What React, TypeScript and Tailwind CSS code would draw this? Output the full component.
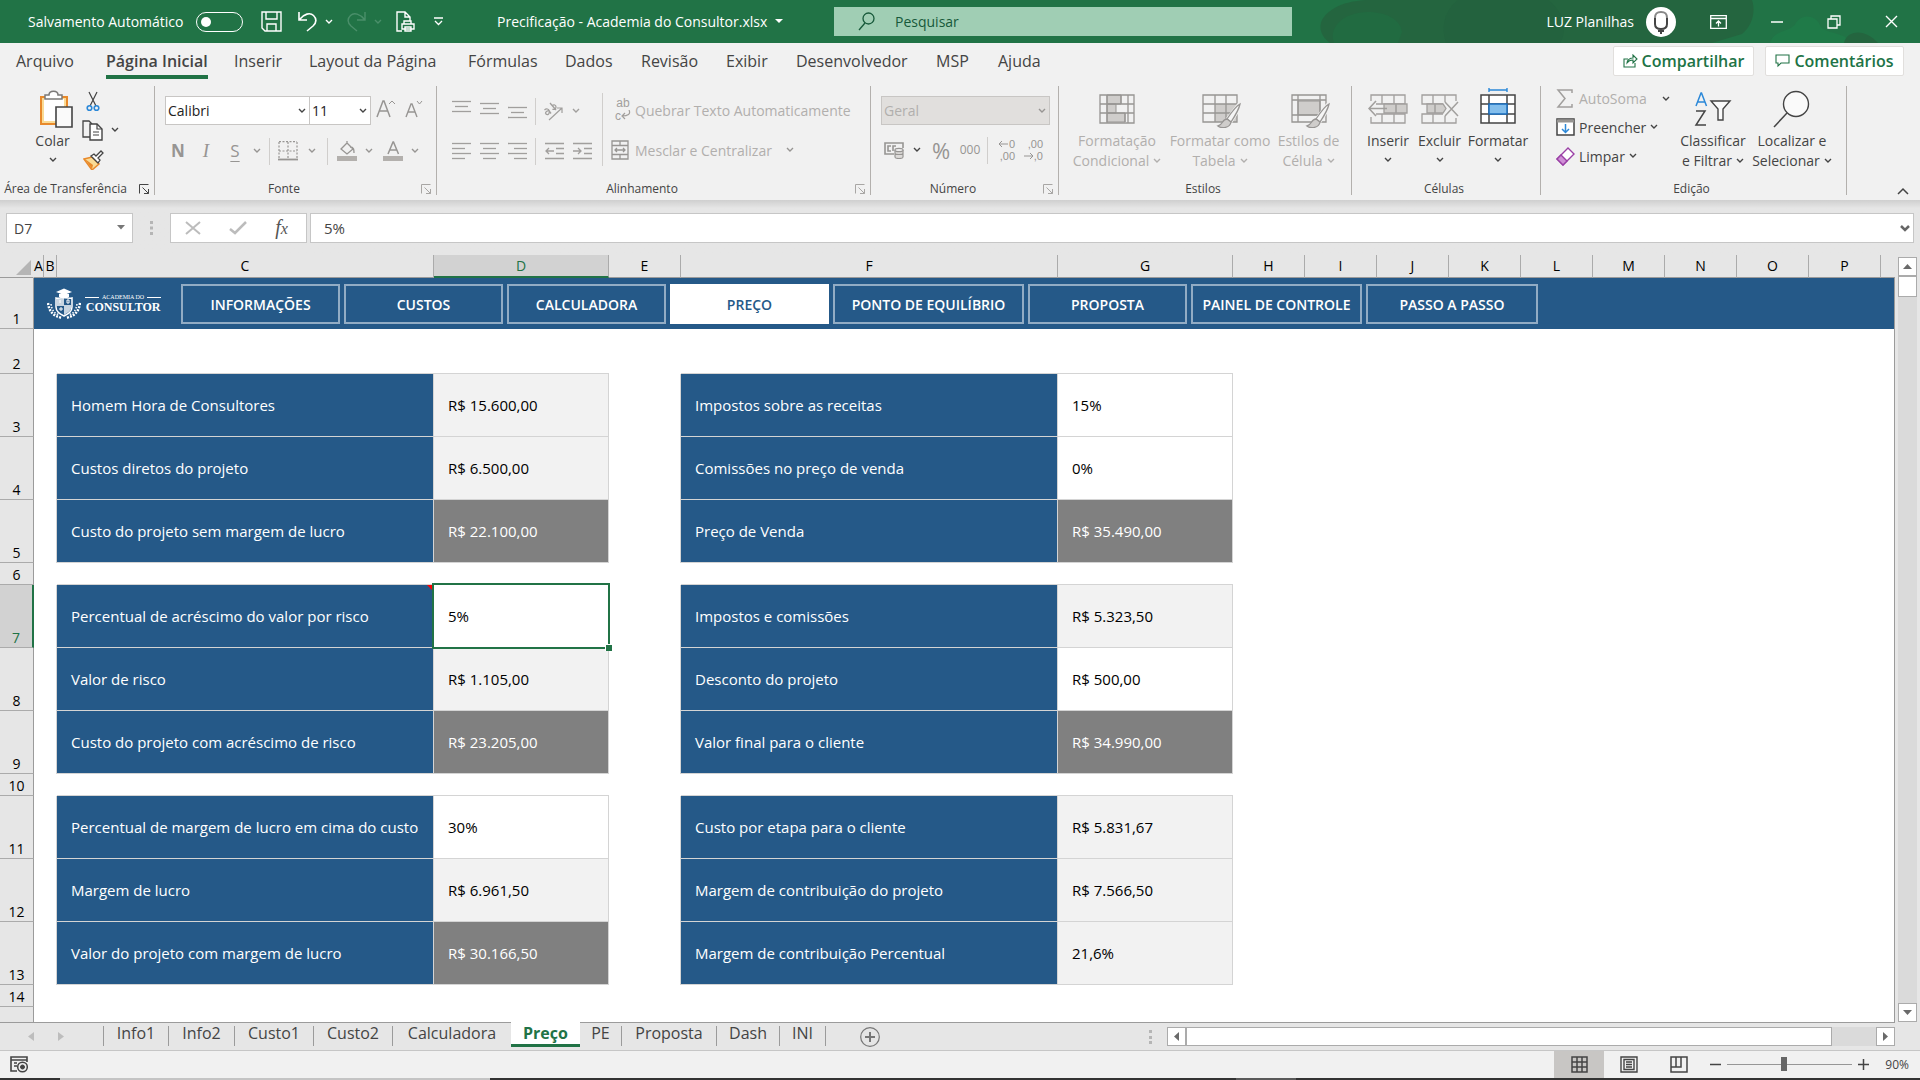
import type { ReactNode } from 'react'

const MENU = [
  { label: 'Arquivo', width: 'w-[90px]' },
  { label: 'Página Inicial', width: 'w-[128px]', active: true },
  { label: 'Inserir', width: 'w-[75px]' },
  { label: 'Layout da Página', width: 'w-[159px]' },
  { label: 'Fórmulas', width: 'w-[97px]' },
  { label: 'Dados', width: 'w-[76px]' },
  { label: 'Revisão', width: 'w-[85px]' },
  { label: 'Exibir', width: 'w-[70px]' },
  { label: 'Desenvolvedor', width: 'w-[140px]' },
  { label: 'MSP', width: 'w-[62px]' },
  { label: 'Ajuda', width: 'w-[60px]' },
]

const NAV = [
  { label: 'INFORMAÇÕES', width: 'w-[159px]' },
  { label: 'CUSTOS', width: 'w-[159px]' },
  { label: 'CALCULADORA', width: 'w-[159px]' },
  { label: 'PREÇO', width: 'w-[159px]', active: true },
  { label: 'PONTO DE EQUILÍBRIO', width: 'w-[191px]' },
  { label: 'PROPOSTA', width: 'w-[159px]' },
  { label: 'PAINEL DE CONTROLE', width: 'w-[171px]' },
  { label: 'PASSO A PASSO', width: 'w-[172px]' },
]

const COLUMNS = [
  { name: 'A', width: 'w-[10px]' },
  { name: 'B', width: 'w-[13px]' },
  { name: 'C', width: 'w-[377px]' },
  { name: 'D', width: 'w-[175px]' },
  { name: 'E', width: 'w-[72px]' },
  { name: 'F', width: 'w-[377px]' },
  { name: 'G', width: 'w-[175px]' },
  { name: 'H', width: 'w-[72px]' },
  { name: 'I', width: 'w-[72px]' },
  { name: 'J', width: 'w-[72px]' },
  { name: 'K', width: 'w-[72px]' },
  { name: 'L', width: 'w-[72px]' },
  { name: 'M', width: 'w-[72px]' },
  { name: 'N', width: 'w-[72px]' },
  { name: 'O', width: 'w-[72px]' },
  { name: 'P', width: 'w-[72px]' },
]

type Tone = 'input' | 'calc' | 'total'

type Row =
  | { n: number; kind: 'gap'; height: string; edge?: boolean }
  | { n: number; kind: 'data'; left: [string, string, Tone]; right: [string, string, Tone] }

const ROWS: Row[] = [
  { n: 2, kind: 'gap', height: 'h-[45px]', edge: true },
  { n: 3, kind: 'data', left: ['Homem Hora de Consultores', 'R$ 15.600,00', 'calc'], right: ['Impostos sobre as receitas', '15%', 'input'] },
  { n: 4, kind: 'data', left: ['Custos diretos do projeto', 'R$ 6.500,00', 'calc'], right: ['Comissões no preço de venda', '0%', 'input'] },
  { n: 5, kind: 'data', left: ['Custo do projeto sem margem de lucro', 'R$ 22.100,00', 'total'], right: ['Preço de Venda', 'R$ 35.490,00', 'total'] },
  { n: 6, kind: 'gap', height: 'h-[22px]', edge: true },
  { n: 7, kind: 'data', left: ['Percentual de acréscimo do valor por risco', '5%', 'input'], right: ['Impostos e comissões', 'R$ 5.323,50', 'calc'] },
  { n: 8, kind: 'data', left: ['Valor de risco', 'R$ 1.105,00', 'calc'], right: ['Desconto do projeto', 'R$ 500,00', 'input'] },
  { n: 9, kind: 'data', left: ['Custo do projeto com acréscimo de risco', 'R$ 23.205,00', 'total'], right: ['Valor final para o cliente', 'R$ 34.990,00', 'total'] },
  { n: 10, kind: 'gap', height: 'h-[22px]', edge: true },
  { n: 11, kind: 'data', left: ['Percentual de margem de lucro em cima do custo', '30%', 'input'], right: ['Custo por etapa para o cliente', 'R$ 5.831,67', 'calc'] },
  { n: 12, kind: 'data', left: ['Margem de lucro', 'R$ 6.961,50', 'calc'], right: ['Margem de contribuição do projeto', 'R$ 7.566,50', 'calc'] },
  { n: 13, kind: 'data', left: ['Valor do projeto com margem de lucro', 'R$ 30.166,50', 'total'], right: ['Margem de contribuição Percentual', '21,6%', 'calc'] },
  { n: 14, kind: 'gap', height: 'h-[22px]' },
]

const TONES: Record<Tone, string> = {
  input: 'bg-white text-black',
  calc: 'bg-[#f2f2f2] text-black',
  total: 'bg-[#808080] text-white',
}

const SHEETS = [
  { label: 'Info1', width: 'w-[66px]' },
  { label: 'Info2', width: 'w-[66px]' },
  { label: 'Custo1', width: 'w-[79px]' },
  { label: 'Custo2', width: 'w-[79px]' },
  { label: 'Calculadora', width: 'w-[118px]' },
  { label: 'Preço', width: 'w-[69px]', active: true },
  { label: 'PE', width: 'w-[42px]' },
  { label: 'Proposta', width: 'w-[95px]' },
  { label: 'Dash', width: 'w-[63px]' },
  { label: 'INI', width: 'w-[46px]' },
]

/* ---------- small drawing helpers ---------- */

function Svg({ w, h, children, className = '' }: { w: number; h: number; children: ReactNode; className?: string }) {
  return (
    <svg aria-hidden width={w} height={h} viewBox={`0 0 ${w} ${h}`} fill="none" stroke="currentColor" className={`shrink-0 ${className}`}>
      {children}
    </svg>
  )
}

function Chevron({ className = '' }: { className?: string }) {
  return (
    <Svg w={8} h={6} className={className}>
      <path d="M1 1l3 3 3-3" strokeWidth="1.4" />
    </Svg>
  )
}

function Launcher({ className = '' }: { className?: string }) {
  return (
    <Svg w={11} h={11} className={className}>
      <path d="M.5 9.500V.5h9M3.500 3.500l6 6M9.500 5v4.500H5" />
    </Svg>
  )
}

function Lines({ rows, w = 19 }: { rows: [number, number][]; w?: number }) {
  return (
    <Svg w={w} h={18}>
      {rows.map(([x1, x2], i) => (
        <path key={i} d={`M${x1} ${i * 5 + 1.5}H${x2}`} strokeWidth="1.3" />
      ))}
    </Svg>
  )
}

function IconButton({ label, width = 'w-7', className = '', children }: { label: string; width?: string; className?: string; children: ReactNode }) {
  return (
    <button type="button" aria-label={label} className={`flex h-[30px] shrink-0 items-center justify-center ${width} ${className}`}>
      {children}
    </button>
  )
}

function Rule({ className = 'h-[27px]' }: { className?: string }) {
  return <span className={`w-px shrink-0 bg-[#d0cecc] ${className}`} />
}

function Group({ label, width, launcher, children }: { label: string; width: string; launcher?: 'on' | 'off'; children: ReactNode }) {
  return (
    <section aria-label={label} className={`flex h-[109px] shrink-0 flex-col justify-between border-r border-[#b3b0ad] ${width}`}>
      {children}
      <div className="flex items-center pr-1">
        <span className={`flex-1 text-center text-[12px] leading-3 whitespace-nowrap text-[#444] ${launcher ? 'pr-2' : ''}`}>{label}</span>
        {launcher && (
          <button type="button" aria-label={`Opções de ${label}`} className={launcher === 'on' ? 'text-[#444]' : 'text-[#a8a6a4]'}>
            <Launcher />
          </button>
        )}
      </div>
    </section>
  )
}

function BigButton({ lines, width, icon, chevronBelow, muted }: { lines: string[]; width: string; icon: ReactNode; chevronBelow?: boolean; muted?: boolean }) {
  return (
    <button type="button" className={`flex shrink-0 flex-col items-center ${width} ${muted ? 'text-[#b1afad]' : 'text-[#444]'}`}>
      <span className="flex h-[45px] items-center">{icon}</span>
      {lines.map((line, i) => (
        <span key={line} className="flex h-5 items-center gap-1 whitespace-nowrap text-[14px] leading-5">
          {line}
          {!chevronBelow && i === lines.length - 1 && <Chevron />}
        </span>
      ))}
      {chevronBelow && <Chevron className="mt-1.5" />}
    </button>
  )
}

const Brush = () => (
  <g>
    <path d="M36 11L23 28l4 3L39 12z" fill="#f1f1f1" stroke="#f1f1f1" strokeWidth="3" />
    <path d="M38 10c-4 2-9 9-13 15l4 3c4-6 8-13 9-18z" fill="#f5f5f5" stroke="#979593" strokeWidth="1.300" />
    <path d="M25 25c-5 0-4 6-9 7 4 3 12 2 13-4z" fill="#cfcdcb" stroke="#979593" strokeWidth="1.300" />
  </g>
)

/* ---------- title bar ---------- */

function TitleBar() {
  return (
    <header className="relative flex h-[43px] items-center bg-[#217346] text-[14px] text-white">
      <svg aria-hidden className="pointer-events-none absolute top-0 right-0" width="660" height="43" viewBox="0 0 660 43" fill="#24653f">
        <path d="M62 20C70 6 90 0 110 0h382c4 12 0 26-10 34l-30 9H70c-8-6-12-14-8-23z" />
        <path d="M108 12c16 0 32 6 34 20l-4 11H74c-6-14 8-31 34-31z" fill="#216b41" />
        <path d="M186 43c-6-18 0-34 12-43h90c16 12 20 30 12 43z" fill="#23623e" />
        <path d="M510 43c4-14 20-10 26-20s20-8 24 2 26 6 30 18z" fill="#1f7a48" />
        <path d="M584 43c2-12 20-16 34 0z" />
      </svg>
      <div className="relative flex w-[834px] shrink-0 items-center pl-7">
        <label className="flex w-[233px] shrink-0 items-center gap-2">
          <span className="w-[160px] whitespace-nowrap">Salvamento Automático</span>
          <input type="checkbox" className="peer sr-only" />
          <span className="flex h-5 w-[47px] items-center rounded-full border border-white pl-1">
            <span className="size-[10px] rounded-full bg-white" />
          </span>
        </label>
        <button type="button" aria-label="Salvar" className="w-[37px]">
          <Svg w={21} h={21}>
            <path d="M1 1h19v19H4l-3-3zM5 1v7h11V1M6 20v-7h9v7" strokeWidth="1.400" />
          </Svg>
        </button>
        <button type="button" aria-label="Desfazer" className="flex w-[49px] items-center gap-2">
          <Svg w={19} h={21}>
            <path d="M1 1v8h8M1.500 8.500C6 3 12 1 15.500 4.500S18 12 15 15l-6 5" strokeWidth="1.600" />
          </Svg>
          <Chevron />
        </button>
        <button type="button" aria-label="Refazer" className="flex w-[49px] items-center gap-2 text-[#4a8f6a]">
          <Svg w={19} h={21}>
            <path d="M18 1v8h-8M17.500 8.500C13 3 7 1 3.500 4.500S1 12 4 15l6 5" strokeWidth="1.400" />
          </Svg>
          <Chevron />
        </button>
        <button type="button" aria-label="Visualizar impressão" className="w-[38px]">
          <Svg w={19} h={21}>
            <path d="M6 20H1V1h8l5 5v4M9 1v5h5M8 13v-3h7v3M6 13h12v5H6zM9 16h6v4H9z" strokeWidth="1.400" />
          </Svg>
        </button>
        <button type="button" aria-label="Personalizar barra" className="w-[63px]">
          <Svg w={9} h={9}>
            <path d="M0 1h9M1 4l3.500 3.500L8 4" strokeWidth="1.300" />
          </Svg>
        </button>
        <h1 className="mr-2 whitespace-nowrap">Precificação - Academia do Consultor.xlsx</h1>
        <Svg w={8} h={5}>
          <path d="M0 0h8L4 4z" fill="currentColor" stroke="none" />
        </Svg>
      </div>
      <label className="relative flex h-[29px] w-[458px] shrink-0 items-center gap-5 bg-[#a0ceb4] pl-6 text-[#17593a]">
        <Svg w={17} h={19}>
          <circle cx="10.500" cy="6.500" r="5.500" strokeWidth="1.300" />
          <path d="M7 11l-6 7" strokeWidth="1.300" />
        </Svg>
        <input type="text" aria-label="Pesquisar" placeholder="Pesquisar" className="w-full bg-transparent outline-none placeholder:text-[#17593a]" />
      </label>
      <div className="relative ml-auto flex items-center">
        <span className="mr-3 whitespace-nowrap">LUZ Planilhas</span>
        <span className="flex size-[30px] items-center justify-center rounded-full bg-white text-[#444]">
          <Svg w={16} h={24}>
            <path d="M2 8C2 3 4 2 8 2s6 1 6 6" stroke="#888" strokeWidth="2" />
            <path d="M2 8v6c0 4 3 5 6 5s6-1 6-5V8M5 21h6M7 23h2" strokeWidth="2" />
          </Svg>
        </span>
        <button type="button" aria-label="Opções da faixa" className="ml-[26px] flex w-[46px] justify-center pr-3.5">
          <Svg w={17} h={14}>
            <path d="M.7.7h15.600v12.600H.7zM.7 3.500h15.600M8.500 11.500V6M6 8.500L8.500 6 11 8.500" strokeWidth="1.300" />
          </Svg>
        </button>
        <button type="button" aria-label="Minimizar" className="flex w-[57px] justify-center">
          <Svg w={12} h={2}>
            <path d="M0 1h12" strokeWidth="1.500" />
          </Svg>
        </button>
        <button type="button" aria-label="Restaurar" className="flex w-[57px] justify-center">
          <Svg w={14} h={14}>
            <path d="M1 4h9v9H1zM4 4V1h9v9h-3" strokeWidth="1.300" />
          </Svg>
        </button>
        <button type="button" aria-label="Fechar" className="flex w-[58px] justify-center">
          <Svg w={13} h={13}>
            <path d="M1 1l11 11M12 1L1 12" strokeWidth="1.400" />
          </Svg>
        </button>
      </div>
    </header>
  )
}

function MenuBar() {
  return (
    <nav className="flex h-[39px] items-center bg-[#f1f1f1] pb-[3px] pl-4 text-[16px] text-[#444]">
      {MENU.map(item => (
        <div key={item.label} className={`shrink-0 ${item.width}`}>
          <button
            type="button"
            className={item.active ? 'border-b-4 border-[#217346] pt-1 font-semibold leading-7 whitespace-nowrap' : 'leading-9 whitespace-nowrap'}
          >
            {item.label}
          </button>
        </div>
      ))}
      <div className="mr-4 ml-auto flex gap-[11px] font-semibold text-[#217346]">
        <button type="button" className="flex h-[30px] w-[141px] items-center justify-center gap-1 rounded-xs border border-[#e1dfdd] bg-white">
          <Svg w={15} h={14}>
            <path d="M5 5H1v8h11V9M4 9c0-3 3-5 6-5V1l4 4-4 4V6C8 6 6 6 4 9z" strokeWidth="1.100" />
          </Svg>
          Compartilhar
        </button>
        <button type="button" className="flex h-[30px] w-[139px] items-center justify-center gap-1 rounded-xs border border-[#e1dfdd] bg-white">
          <Svg w={15} h={14}>
            <path d="M1 1h13v8H6l-3 3V9H1z" strokeWidth="1.100" />
          </Svg>
          Comentários
        </button>
      </div>
    </nav>
  )
}

/* ---------- ribbon ---------- */

function ClipboardGroup() {
  return (
    <Group label="Área de Transferência" width="w-[155px]" launcher="on">
      <div className="flex pl-[27px] text-[#444]">
        <BigButton
          lines={['Colar']}
          width="w-[51px]"
          chevronBelow
          icon={
            <Svg w={34} h={38} className="ml-1.5">
              <path d="M2 7h26v27H2z" fill="#fadb95" stroke="#e8892b" strokeWidth="2" />
              <path d="M5 9h20v22H5z" fill="#fff" stroke="none" />
              <path d="M6 9V5h4c0-5 9-5 9 0h4v4z" fill="#fff" stroke="#7b7977" strokeWidth="1.500" />
              <path d="M17 17h16v20H17z" fill="#fafafa" stroke="#444" strokeWidth="1.600" />
            </Svg>
          }
        />
        <div className="flex flex-col pt-1">
          <button type="button" aria-label="Recortar" className="flex h-[22px] w-[30px] items-center justify-center">
            <Svg w={14} h={21}>
              <path d="M3 1l7 14M11 1L4 15" strokeWidth="1.200" />
              <circle cx="3.500" cy="17" r="2.300" stroke="#2b88d8" strokeWidth="1.600" />
              <circle cx="10.500" cy="17" r="2.300" stroke="#2b88d8" strokeWidth="1.600" />
            </Svg>
          </button>
          <button type="button" aria-label="Copiar" className="flex h-9 items-center gap-2 pl-1">
            <Svg w={21} h={21}>
              <path d="M8 17H1V1h6l3 3" strokeWidth="1.300" />
              <path d="M8 4h7l5 5v11H8z" fill="#fff" strokeWidth="1.400" />
              <path d="M15 4v5h5M11 12h6M11 15h6" strokeWidth="1.200" />
            </Svg>
            <Chevron />
          </button>
          <button type="button" aria-label="Pincel de formatação" className="flex h-6 items-center pl-[5px]">
            <Svg w={21} h={20}>
              <path d="M1 9l8-2 7 7-7 6z" fill="#fadb95" stroke="#e8892b" strokeWidth="1.500" />
              <path d="M2 9l8 6-1 4z" fill="#e8892b" stroke="none" />
              <path d="M8 6l3-2 2 2 5-5 2 2-5 5 2 2-2 3z" fill="#fff" strokeWidth="1.300" />
            </Svg>
          </button>
        </div>
      </div>
    </Group>
  )
}

function FontGroup() {
  return (
    <Group label="Fonte" width="w-[282px]" launcher="off">
      <div className="flex flex-col gap-[10px] pt-[10px] pl-[10px] text-[#979593]">
        <div className="flex">
          <div className="relative">
            <select aria-label="Fonte" className="h-[29px] w-[145px] appearance-none border border-[#c8c6c4] bg-white pl-0.5 text-[14px] text-[#222]">
              <option>Calibri</option>
            </select>
            <Chevron className="pointer-events-none absolute top-3 right-1 text-[#444]" />
          </div>
          <div className="relative -ml-px">
            <select aria-label="Tamanho da fonte" className="h-[29px] w-[62px] appearance-none border border-[#c8c6c4] bg-white pl-0.5 text-[14px] text-[#222]">
              <option>11</option>
            </select>
            <Chevron className="pointer-events-none absolute top-3 right-1 text-[#444]" />
          </div>
          <IconButton label="Aumentar fonte" width="w-[30px]" className="pb-1">
            <Svg w={20} h={20}>
              <path d="M1 18L7 2h1l6 16M3.500 12h8" strokeWidth="1.500" />
              <path d="M13 5l3-3 3 3" />
            </Svg>
          </IconButton>
          <IconButton label="Diminuir fonte" width="w-[26px]" className="pb-1">
            <Svg w={18} h={20}>
              <path d="M1 18L6 5h1l5 13M3 13h7" strokeWidth="1.400" />
              <path d="M12 2l2.500 3L17 2" />
            </Svg>
          </IconButton>
        </div>
        <div className="flex items-center">
          <IconButton label="Negrito" width="w-[26px]"><span className="text-[17px] font-bold">N</span></IconButton>
          <IconButton label="Itálico" width="w-[30px]"><span className="font-['Liberation_Serif',serif] text-[19px] italic">I</span></IconButton>
          <IconButton label="Sublinhado" width="w-7"><span className="text-[17px] underline underline-offset-4">S</span></IconButton>
          <IconButton label="Mais sublinhados" width="w-4"><Chevron /></IconButton>
          <Rule className="mx-1 h-[27px]" />
          <IconButton label="Bordas">
            <Svg w={20} h={20}>
              <path d="M1 .7h18M1 10h18M1 1v17M10 1v17M19 1v17" strokeDasharray="2 1.500" strokeWidth="1.200" />
              <path d="M0 18.500h20" strokeWidth="1.800" />
            </Svg>
          </IconButton>
          <IconButton label="Mais bordas" width="w-5"><Chevron /></IconButton>
          <Rule className="mx-[5px] h-[27px]" />
          <IconButton label="Cor de preenchimento">
            <Svg w={20} h={20}>
              <path d="M4 8l6-6 6 6-6 5zM10 2V0M13 6c4 0 4 3 4 6" strokeWidth="1.300" />
              <path d="M0 17.500h20" strokeWidth="5" stroke="#b3b0ad" />
            </Svg>
          </IconButton>
          <IconButton label="Mais cores" width="w-4"><Chevron /></IconButton>
          <IconButton label="Cor da fonte" width="w-8">
            <Svg w={20} h={20}>
              <path d="M5 13l5-12h.5l5 12M6.500 9h7.500" strokeWidth="1.500" />
              <path d="M0 17.500h20" strokeWidth="5" stroke="#b3b0ad" />
            </Svg>
          </IconButton>
          <IconButton label="Mais cores de fonte" width="w-3"><Chevron /></IconButton>
        </div>
      </div>
    </Group>
  )
}

function AlignGroup() {
  return (
    <Group label="Alinhamento" width="w-[434px]" launcher="off">
      <div className="flex pt-[7px] pl-[10px] text-[#a19f9d]">
        <div className="flex flex-col gap-[10px] pt-[3px]">
          <div className="flex items-center">
            <IconButton label="Alinhar acima" className="pb-1"><Lines rows={[[0, 19], [3, 16], [0, 19]]} /></IconButton>
            <IconButton label="Centralizar verticalmente"><Lines rows={[[0, 19], [3, 16], [0, 19]]} /></IconButton>
            <IconButton label="Alinhar abaixo" className="pt-2"><Lines rows={[[0, 19], [3, 16], [0, 19]]} /></IconButton>
            <Rule className="mx-1 h-[27px]" />
            <IconButton label="Orientação" width="w-[26px]">
              <Svg w={20} h={20}>
                <path d="M6 19L19 7M14 7h5v5" strokeWidth="1.200" />
                <path d="M1.500 9c2-2 4-1 5 1M5 8.500l3 4M2.500 12.500c0-2 2-3 3.500-2.500M2.500 12.500c2 2 4 1 3.500-1.500M7 2l6 7M9 5c2-2 4-1 4 1s-2 3-3.500 2" strokeWidth="1.300" />
              </Svg>
            </IconButton>
            <IconButton label="Mais orientações" width="w-5"><Chevron /></IconButton>
          </div>
          <div className="flex items-center">
            <IconButton label="Alinhar à esquerda"><Lines rows={[[0, 19], [0, 13], [0, 19], [0, 13]]} /></IconButton>
            <IconButton label="Centralizar"><Lines rows={[[0, 19], [3, 16], [0, 19], [3, 16]]} /></IconButton>
            <IconButton label="Alinhar à direita"><Lines rows={[[0, 19], [6, 19], [0, 19], [6, 19]]} /></IconButton>
            <Rule className="mx-1 h-[27px]" />
            <IconButton label="Diminuir recuo">
              <Svg w={19} h={18}>
                <path d="M0 1.500h19M11 6.500h8M11 11.500h8M0 16.500h19M1 9h8M4 6L1 9l3 3" strokeWidth="1.300" />
              </Svg>
            </IconButton>
            <IconButton label="Aumentar recuo">
              <Svg w={19} h={18}>
                <path d="M0 1.500h19M11 6.500h8M11 11.500h8M0 16.500h19M0 9h8M5 6l3 3-3 3" strokeWidth="1.300" />
              </Svg>
            </IconButton>
          </div>
        </div>
        <Rule className="mr-2 ml-[6px] h-[73px]" />
        <div className="flex flex-col gap-[10px] pt-[2px] text-[14px] text-[#b1afad]">
          <button type="button" className="flex h-[30px] items-center gap-1 whitespace-nowrap">
            <span className="flex w-5 flex-col pl-1 font-['Liberation_Sans',sans-serif] text-[12px] leading-[13px] text-[#a19f9d]">
              <span>ab</span>
              <span className="flex">
                c
                <Svg w={10} h={10}>
                  <path d="M8 0c2 4-1 6-7 6M4 3L1 6l3 3" strokeWidth="1.200" />
                </Svg>
              </span>
            </span>
            Quebrar Texto Automaticamente
          </button>
          <div className="flex items-center">
            <button type="button" className="flex h-[30px] w-[164px] items-center gap-[6px] whitespace-nowrap">
              <Svg w={18} h={20} className="text-[#979593]">
                <path d="M1 1h16v18H1zM1 5.500h16M1 14.500h16M9 1v4M9 15v4M4 10h10M6 8l-2 2 2 2M12 8l2 2-2 2" strokeWidth="1.300" />
              </Svg>
              Mesclar e Centralizar
            </button>
            <IconButton label="Mais mesclagens" width="w-[30px]" className="text-[#979593]"><Chevron /></IconButton>
          </div>
        </div>
      </div>
    </Group>
  )
}

function NumberGroup() {
  return (
    <Group label="Número" width="w-[188px]" launcher="off">
      <div className="flex flex-col gap-[10px] pt-[10px] pl-[10px] text-[#979593]">
        <div className="relative w-[169px]">
          <select aria-label="Formato de número" disabled className="h-[29px] w-full appearance-none border border-[#c8c6c4] bg-[#e1dfdd] pl-0.5 text-[14px] text-[#b1afad] opacity-100">
            <option>Geral</option>
          </select>
          <Chevron className="pointer-events-none absolute top-3 right-1" />
        </div>
        <div className="flex items-center">
          <IconButton label="Moeda" width="w-[27px]">
            <Svg w={21} h={18}>
              <path d="M10 13H1V2h18v5M7 5H4v5h3M12 5H9v5" strokeWidth="1.600" />
              <path d="M11 9v7c0 2 8 2 8 0V9M11 12c0 2 8 2 8 0" fill="#dddbd9" strokeWidth="1.200" />
              <ellipse cx="15" cy="9" rx="4" ry="1.700" fill="#eee" strokeWidth="1.200" />
            </Svg>
          </IconButton>
          <IconButton label="Mais moedas" width="w-[18px]" className="text-[#444]"><Chevron /></IconButton>
          <IconButton label="Porcentagem" width="w-[30px]"><span className="text-[22px]">%</span></IconButton>
          <IconButton label="Milhares"><span className="text-[12px]">000</span></IconButton>
          <Rule className="mx-[3px] h-[27px]" />
          <IconButton label="Aumentar casas decimais">
            <span className="flex w-5 flex-col items-end font-['Liberation_Sans',sans-serif] text-[11px] leading-[12px]">
              <span className="flex items-center">
                <Svg w={11} h={8}><path d="M1 4h9M4 1L1 4l3 3" /></Svg>0
              </span>
              <span>,00</span>
            </span>
          </IconButton>
          <IconButton label="Diminuir casas decimais">
            <span className="flex w-5 flex-col items-end font-['Liberation_Sans',sans-serif] text-[11px] leading-[12px]">
              <span>,00</span>
              <span className="flex items-center">
                <Svg w={10} h={8}><path d="M0 4h9M6 1l3 3-3 3" /></Svg>,0
              </span>
            </span>
          </IconButton>
        </div>
      </div>
    </Group>
  )
}

function StylesGroup() {
  return (
    <Group label="Estilos" width="w-[293px]">
      <div className="flex pl-2">
        <BigButton
          muted
          lines={['Formatação', 'Condicional']}
          width="w-[100px]"
          icon={
            <Svg w={36} h={30} className="text-[#979593]">
              <path d="M8 1h14v9H8zM8 10h9v9H8zM8 19h18v9H8z" fill="#cfcdcb" />
              <path d="M1 1h34v28H1zM1 10h34M1 19h34M8 1v28M29 1v28M22 1v9M26 19v9" strokeWidth="1.300" />
            </Svg>
          }
        />
        <BigButton
          muted
          lines={['Formatar como', 'Tabela']}
          width="w-[106px]"
          icon={
            <Svg w={40} h={34} className="mt-1 ml-1 text-[#979593]">
              <path d="M13 10h22v18H13z" fill="#cfcdcb" stroke="none" />
              <path d="M1 1h34v27H1zM1 10h34M1 19h34M13 1v27M24 1v27" strokeWidth="1.300" />
              <Brush />
            </Svg>
          }
        />
        <BigButton
          muted
          lines={['Estilos de', 'Célula']}
          width="w-[71px]"
          icon={
            <Svg w={40} h={34} className="mt-1 ml-1 text-[#979593]">
              <path d="M7 7h22v14H7z" fill="#cfcdcb" />
              <path d="M1 1h34v27H1zM1 6h34M1 21h34M7 1v27M29 1v27" strokeWidth="1.300" />
              <Brush />
            </Svg>
          }
        />
      </div>
    </Group>
  )
}

function CellsGroup() {
  return (
    <Group label="Células" width="w-[189px]">
      <div className="flex pl-2.5">
        <BigButton
          lines={['Inserir']}
          width="w-[52px]"
          chevronBelow
          icon={
            <Svg w={40} h={30} className="text-[#a19f9d]">
              <path d="M3 7V1h34v9H8M3 23v6h34v-9H8M14 1v9M26 1v9M14 20v9M26 20v9" strokeWidth="1.300" />
              <path d="M16 10h23v9H16z" fill="#cfcdcb" strokeWidth="1.300" />
              <path d="M28 10v9M1 14.500h18M8 7l-7 7.500L8 22" strokeWidth="1.600" />
            </Svg>
          }
        />
        <BigButton
          lines={['Excluir']}
          width="w-[51px]"
          chevronBelow
          icon={
            <Svg w={38} h={30} className="text-[#a19f9d]">
              <path d="M22 10H1V1h34v6M22 20H1v9h34v-5M12 1v9M24 1v7M12 20v9M24 22v7" strokeWidth="1.300" />
              <path d="M6 10h16l3 4.500-3 4.500H6z" fill="#cfcdcb" strokeWidth="1.300" />
              <path d="M14 10v9M24 8l13 14M37 8L24 22" strokeWidth="1.500" />
            </Svg>
          }
        />
        <BigButton
          lines={['Formatar']}
          width="w-[66px]"
          chevronBelow
          icon={
            <Svg w={36} h={36} className="mb-1.5">
              <path d="M9 2h18M9 0v4M27 0v4" stroke="#2b88d8" strokeWidth="1.400" />
              <path d="M1 7h34v28H1zM1 16h34M1 26h34M9 7v28M27 7v28" fill="#fff" strokeWidth="1.500" />
              <path d="M9 16h18v10H9z" fill="#83beec" stroke="#1a6fc0" strokeWidth="1.500" />
            </Svg>
          }
        />
      </div>
    </Group>
  )
}

function EditingGroup() {
  return (
    <Group label="Edição" width="w-[306px]">
      <div className="flex pl-[15px] text-[14px] text-[#444]">
        <div className="flex w-[119px] flex-col">
          <button type="button" className="flex h-[25px] items-center gap-[5px] text-[#b1afad]">
            <Svg w={18} h={20} className="text-[#a19f9d]">
              <path d="M16 4V1H2l7 8.500L2 18h14v-3" strokeWidth="1.500" />
            </Svg>
            <span className="w-[78px] text-left">AutoSoma</span>
            <Chevron className="text-[#444]" />
          </button>
          <button type="button" className="flex h-8 items-center gap-1">
            <Svg w={19} h={18}>
              <path d="M1 1h17v16H1z" fill="#fff" strokeWidth="1.500" />
              <path d="M1 3h17" stroke="#979593" strokeWidth="3" />
              <path d="M9.500 6v8M6 11l3.500 3.500L13 11" stroke="#2b88d8" strokeWidth="1.500" />
            </Svg>
            Preencher
            <Chevron />
          </button>
          <button type="button" className="flex h-[26px] items-center gap-1">
            <Svg w={19} h={19}>
              <path d="M1 12L12 1l6 6L7 18z" fill="#fff" stroke="#9a3fa5" strokeWidth="1.400" />
              <path d="M1 12l4-4 6 6-4 4z" fill="#cf8fd6" stroke="#9a3fa5" strokeWidth="1.400" />
            </Svg>
            Limpar
            <Chevron />
          </button>
        </div>
        <BigButton
          lines={['Classificar', 'e Filtrar']}
          width="w-[76px]"
          icon={
            <Svg w={38} h={36}>
              <path d="M2 15L7 2h.500l5 13M4 11h7" stroke="#2b88d8" strokeWidth="1.500" />
              <path d="M2 20h9L2 34h10" strokeWidth="1.500" />
              <path d="M17 10h19l-7 8v11h-5V18z" fill="#fafafa" strokeWidth="1.400" />
            </Svg>
          }
        />
        <BigButton
          lines={['Localizar e', 'Selecionar']}
          width="w-[82px]"
          icon={
            <Svg w={38} h={38}>
              <circle cx="23" cy="14" r="12.500" fill="#fafafa" strokeWidth="1.400" />
              <path d="M14 23L1 37" strokeWidth="1.500" />
            </Svg>
          }
        />
      </div>
    </Group>
  )
}

function Ribbon() {
  return (
    <div className="flex h-[118px] bg-[#f1f1f1] pt-1">
      <ClipboardGroup />
      <FontGroup />
      <AlignGroup />
      <NumberGroup />
      <StylesGroup />
      <CellsGroup />
      <EditingGroup />
      <button type="button" aria-label="Recolher faixa" className="mr-[11px] mb-0.5 ml-auto self-end text-[#444]">
        <Svg w={12} h={12}>
          <path d="M1 8l5-5 5 5" strokeWidth="1.500" />
        </Svg>
      </button>
    </div>
  )
}

function FormulaBar() {
  return (
    <div className="bg-linear-to-b from-[#cfcfcf] to-[#e6e6e6] to-15%">
      <div className="flex h-[55px] items-start pt-[13px] pr-[6px] pl-[6px] text-[14px] text-[#444]">
        <div className="relative w-[127px] shrink-0">
          <input type="text" aria-label="Caixa de nome" defaultValue="D7" className="h-[30px] w-full border border-[#c6c6c6] bg-white pl-[7px] outline-none" />
          <Svg w={8} h={5} className="absolute top-3 right-2 text-[#777]">
            <path d="M0 0h8L4 4.500z" fill="currentColor" stroke="none" />
          </Svg>
        </div>
        <Svg w={37} h={30}>
          <path d="M18.500 8v3M18.500 13.500v3M18.500 19v3" stroke="#b5b5b5" strokeWidth="3" />
        </Svg>
        <div className="flex h-[30px] w-[137px] shrink-0 items-center justify-around border border-[#c6c6c6] bg-white pr-1">
          <button type="button" aria-label="Cancelar">
            <Svg w={16} h={14} className="text-[#bcbcbc]"><path d="M1 1l14 12M15 1L1 13" strokeWidth="2" /></Svg>
          </button>
          <button type="button" aria-label="Inserir">
            <Svg w={18} h={14} className="text-[#bcbcbc]"><path d="M1 8l5 4L17 1" strokeWidth="2.500" /></Svg>
          </button>
          <button type="button" aria-label="Inserir função" className="font-['Liberation_Serif',serif] text-[20px] leading-6 text-[#555] italic">
            f<span className="text-[16px]">x</span>
          </button>
        </div>
        <div className="relative ml-[3px] flex-1">
          <input type="text" aria-label="Barra de fórmulas" defaultValue="5%" className="h-[30px] w-full border border-[#c6c6c6] bg-white pl-[13px] text-[15px] outline-none" />
          <Svg w={10} h={8} className="absolute top-3 right-1 text-[#666]">
            <path d="M1 1l4 4 4-4" strokeWidth="2.500" />
          </Svg>
        </div>
      </div>
    </div>
  )
}

/* ---------- sheet ---------- */

function Logo() {
  return (
    <div className="flex w-[130px] shrink-0 items-center gap-1 text-white">
      <Svg w={34} h={32}>
        <path d="M9 4l8-3.500L25 4l-8 3z" fill="currentColor" stroke="none" />
        <path d="M12 6v3c3 2 7 2 10 0V6" fill="currentColor" stroke="none" />
        <path d="M9 10c3 1 5 0 8-1 3 1 5 2 8 1v9c0 5-4 7-8 9-4-2-8-4-8-9z" strokeWidth="1.500" />
        <path d="M17 10v7h7v3c0 3-4 5-7 7v-9h-7v-7z" fill="currentColor" fillOpacity=".75" stroke="none" />
        <path d="M12 21h4M14 19v4M13 12v3M20 12h2v3h-2z" />
        <path d="M1 15c1 8 5 13 14 15M33 15c-1 8-5 13-14 15" strokeWidth="2.500" strokeDasharray="2 1.200" />
        <path d="M4 16c1 6 3 9 8 11M30 16c-1 6-3 9-8 11" strokeWidth="1.500" strokeDasharray="1.500 1.500" />
      </Svg>
      <div className="flex flex-col items-center font-['Liberation_Serif',serif]">
        <div className="flex items-center gap-[3px] text-[6px] leading-[8px] whitespace-nowrap">
          <span className="h-px w-[14px] bg-white" />
          ACADEMIA DO
          <span className="h-px w-[14px] bg-white" />
        </div>
        <div className="text-[12px] leading-[13px] font-bold">CONSULTOR</div>
      </div>
    </div>
  )
}

function RowHeader({ n, selected }: { n?: number; selected?: boolean }) {
  return (
    <th
      scope="row"
      className={
        selected
          ? 'border-r-2 border-b border-r-[#217346] border-b-[#ababab] bg-[#d2d2d2] text-center align-bottom text-[14px] leading-[19px] font-normal text-[#217346]'
          : 'border-r border-b border-r-[#9b9b9b] border-b-[#ababab] bg-[#e6e6e6] text-center align-bottom text-[14px] leading-[19px] font-normal text-black'
      }
    >
      {n}
    </th>
  )
}

function LabelCell({ text, note }: { text: string; note?: boolean }) {
  return (
    <td className="relative border-r border-b border-[#d4d4d4] bg-[#255988] pl-[14px] whitespace-nowrap text-white">
      {text}
      {note && (
        <svg aria-hidden className="absolute top-0 right-0" width="6" height="6" viewBox="0 0 6 6">
          <path d="M0 0h6v6z" fill="#f00" />
        </svg>
      )}
    </td>
  )
}

function ValueCell({ text, tone, selected }: { text: string; tone: Tone; selected?: boolean }) {
  return (
    <td className={`relative border-r border-b border-[#d4d4d4] pl-[14px] whitespace-nowrap ${TONES[tone]}`}>
      {text}
      {selected && (
        <>
          <span className="pointer-events-none absolute -inset-[2px] z-10 border-2 border-[#217346]" />
          <span className="absolute -right-1 -bottom-1 z-10 size-[7px] border-t border-l border-white bg-[#217346]" />
        </>
      )}
    </td>
  )
}

function Sheet() {
  return (
    <table className="w-full table-fixed border-separate border-spacing-0 bg-white text-[15px] text-black">
      <thead>
        <tr className="h-[23px] bg-[#e6e6e6] text-[14px] leading-5">
          <th className="w-[34px] border-r border-b border-r-[#e6e6e6] border-b-[#9b9b9b] pr-0.5 pb-0.5">
            <Svg w={15} h={15} className="mt-1 ml-auto">
              <path d="M15 0v15H0z" fill="#b5b5b5" stroke="none" />
            </Svg>
          </th>
          {COLUMNS.map(col => (
            <th
              key={col.name}
              scope="col"
              className={
                col.name === 'D'
                  ? `border-r border-b-2 border-r-[#ababab] border-b-[#217346] bg-[#d2d2d2] font-normal text-[#217346] ${col.width}`
                  : `border-r border-b border-r-[#ababab] border-b-[#9b9b9b] font-normal ${col.width}`
              }
            >
              {col.name}
            </th>
          ))}
          <th className="border-b border-[#9b9b9b]" />
        </tr>
      </thead>
      <tbody>
        <tr className="h-[51px]">
          <RowHeader n={1} />
          <td colSpan={17} className="border-r border-r-[#9b9b9b] bg-[#255988]">
            <nav className="flex items-center gap-1 pl-[13px]">
              <Logo />
              {NAV.map(item => (
                <a
                  key={item.label}
                  href="#"
                  className={
                    item.active
                      ? `flex h-10 shrink-0 items-center justify-center border-2 border-white bg-white pt-0.5 text-[14px] font-semibold whitespace-nowrap text-[#255988] ${item.width}`
                      : `flex h-10 shrink-0 items-center justify-center border-2 border-[#92acc4] pt-0.5 text-[14px] font-semibold whitespace-nowrap text-white ${item.width}`
                  }
                >
                  {item.label}
                </a>
              ))}
            </nav>
          </td>
        </tr>
        {ROWS.map(row =>
          row.kind === 'gap' ? (
            <tr key={row.n} className={row.height}>
              <RowHeader n={row.n} />
              <td colSpan={2} />
              <td colSpan={2} className={row.edge ? 'border-b border-[#d4d4d4]' : ''} />
              <td />
              <td colSpan={2} className={row.edge ? 'border-b border-[#d4d4d4]' : ''} />
              <td colSpan={10} className="border-r border-[#9b9b9b]" />
            </tr>
          ) : (
            <tr key={row.n} className="h-[63px]">
              <RowHeader n={row.n} selected={row.n === 7} />
              <td />
              <td className="border-r border-[#d4d4d4]" />
              <LabelCell text={row.left[0]} note={row.n === 7} />
              <ValueCell text={row.left[1]} tone={row.left[2]} selected={row.n === 7} />
              <td className="border-r border-[#d4d4d4]" />
              <LabelCell text={row.right[0]} />
              <ValueCell text={row.right[1]} tone={row.right[2]} />
              <td colSpan={10} className="border-r border-[#9b9b9b]" />
            </tr>
          ),
        )}
        <tr className="h-[15px]">
          <td className="border-r border-[#9b9b9b] bg-[#e6e6e6]" />
          <td colSpan={17} className="border-r border-[#9b9b9b]" />
        </tr>
      </tbody>
    </table>
  )
}

function VerticalScroll() {
  return (
    <div className="flex w-[25px] shrink-0 flex-col bg-[#e6e6e6] pt-0.5 pr-[3px] pl-[3px] text-[#6a6a6a]">
      <button type="button" aria-label="Rolar para cima" className="flex h-[19px] items-center justify-center border border-[#ababab] bg-white">
        <Svg w={9} h={5}><path d="M0 5h9L4.500 0z" fill="currentColor" stroke="none" /></Svg>
      </button>
      <div className="flex-1 bg-[#dadada]">
        <div className="h-[21px] border border-[#ababab] bg-white" />
      </div>
      <button type="button" aria-label="Rolar para baixo" className="flex h-[19px] items-center justify-center border border-[#ababab] bg-white">
        <Svg w={9} h={5}><path d="M0 0h9L4.500 5z" fill="currentColor" stroke="none" /></Svg>
      </button>
    </div>
  )
}

function SheetTabs() {
  return (
    <div className="flex h-[29px] bg-[#e6e6e6] text-[16px] text-[#444]">
      <div className="flex flex-1 border-t border-t-[#9b9b9b] border-b border-b-[#c6c6c6]">
        <div className="flex w-[103px] shrink-0 items-center gap-6 pl-[28px] text-[#bdbdbd]">
          <Svg w={6} h={9}><path d="M6 0v9L0 4.500z" fill="currentColor" stroke="none" /></Svg>
          <Svg w={6} h={9}><path d="M0 0v9l6-4.500z" fill="currentColor" stroke="none" /></Svg>
        </div>
        {SHEETS.map((sheet, i) => (
          <button
            key={sheet.label}
            type="button"
            className={
              sheet.active
                ? `-mt-px mb-[3px] shrink-0 border-b-3 border-[#217346] bg-white leading-5 font-bold text-[#217346] ${sheet.width}`
                : `mt-[3px] mb-1 flex shrink-0 items-center justify-center pb-1.5 leading-4 ${i === 4 ? '' : 'border-r border-[#9b9b9b]'} ${i === 0 ? 'border-l' : ''} ${sheet.width}`
            }
          >
            {sheet.label}
          </button>
        ))}
        <button type="button" aria-label="Nova planilha" className="ml-[34px] text-[#777]">
          <Svg w={20} h={20}>
            <circle cx="10" cy="10" r="9.300" strokeWidth="1.200" />
            <path d="M10 5v10M5 10h10" strokeWidth="2" />
          </Svg>
        </button>
        <Svg w={19} h={22} className="mt-1 ml-auto">
          <path d="M2.500 3v3M2.500 9v3M2.500 14v3" stroke="#b5b5b5" strokeWidth="3" />
        </Svg>
        <div className="mt-1 flex h-[19px] w-[728px] shrink-0 bg-[#dadada] text-[#6a6a6a]">
          <button type="button" aria-label="Rolar para a esquerda" className="flex w-[19px] items-center justify-center border border-[#ababab] bg-white">
            <Svg w={5} h={9}><path d="M5 0v9L0 4.500z" fill="currentColor" stroke="none" /></Svg>
          </button>
          <div className="w-[646px] border border-[#ababab] bg-white" />
          <button type="button" aria-label="Rolar para a direita" className="ml-auto flex w-[19px] items-center justify-center border border-[#ababab] bg-white">
            <Svg w={5} h={9}><path d="M0 0v9l5-4.500z" fill="currentColor" stroke="none" /></Svg>
          </button>
        </div>
      </div>
      <div className="w-[25px] shrink-0 border-b border-[#c6c6c6]" />
    </div>
  )
}

function StatusBar() {
  return (
    <footer className="bg-[#f1f1f1] text-[#444]">
      <div className="flex h-[27px] items-center pl-[10px]">
        <button type="button" aria-label="Gravar macro">
          <Svg w={19} h={17}>
            <path d="M7 15H1V1h16v5M1 4h16M4 7h3M4 10h3" strokeWidth="1.600" />
            <circle cx="12.500" cy="11" r="4.800" strokeWidth="1.500" />
            <circle cx="12.500" cy="11" r="2" fill="currentColor" />
          </Svg>
        </button>
        <button type="button" aria-label="Normal" className="ml-auto flex h-full w-[50px] items-center justify-center bg-[#c8c6c4]">
          <Svg w={17} h={17}>
            <path d="M1 1h15v15H1zM1 6h15M1 11h15M6 1v15M11 1v15" strokeWidth="1.500" />
          </Svg>
        </button>
        <button type="button" aria-label="Layout da página" className="flex w-[50px] justify-center">
          <Svg w={18} h={17}>
            <path d="M1 1h16v15H1zM4 3.500h10v10H4zM6 6h6M6 8.500h6M6 11h6" strokeWidth="1.400" />
          </Svg>
        </button>
        <button type="button" aria-label="Quebra de página" className="mr-[6px] flex w-[50px] justify-center">
          <Svg w={18} h={17}>
            <path d="M1 1h16v15H1zM1 11h10V1M6 1v10" strokeWidth="1.500" />
          </Svg>
        </button>
        <button type="button" aria-label="Reduzir zoom" className="w-[17px]">
          <Svg w={11} h={11}><path d="M0 5.500h11" strokeWidth="1.500" /></Svg>
        </button>
        <input
          type="range"
          aria-label="Zoom"
          min={0}
          max={100}
          defaultValue={45}
          className="h-[14px] w-[125px] appearance-none bg-transparent [&::-webkit-slider-runnable-track]:h-px [&::-webkit-slider-runnable-track]:bg-[#979797] [&::-webkit-slider-thumb]:-mt-[7px] [&::-webkit-slider-thumb]:h-[14px] [&::-webkit-slider-thumb]:w-[6px] [&::-webkit-slider-thumb]:appearance-none [&::-webkit-slider-thumb]:bg-[#666]"
        />
        <button type="button" aria-label="Ampliar zoom" className="ml-[6px]">
          <Svg w={11} h={11}><path d="M0 5.500h11M5.500 0v11" strokeWidth="1.500" /></Svg>
        </button>
        <span className="w-[51px] pr-[11px] text-right text-[12px]">90%</span>
      </div>
      {/* sliver of the desktop taskbar */}
      <div className="flex h-0.5 bg-[#333]">
        <span className="ml-[60px] w-[430px] bg-[#c4c4c4]" />
        <span className="ml-[746px] w-[60px] bg-[#5a5a5a]" />
      </div>
    </footer>
  )
}

export default function App() {
  return (
    <div className="flex min-h-screen flex-col overflow-hidden bg-[#e6e6e6] font-['Open_Sans',sans-serif]">
      <TitleBar />
      <MenuBar />
      <Ribbon />
      <FormulaBar />
      <main className="flex flex-1 bg-[#e6e6e6]">
        <div className="min-w-0 flex-1">
          <Sheet />
        </div>
        <VerticalScroll />
      </main>
      <SheetTabs />
      <StatusBar />
    </div>
  )
}
